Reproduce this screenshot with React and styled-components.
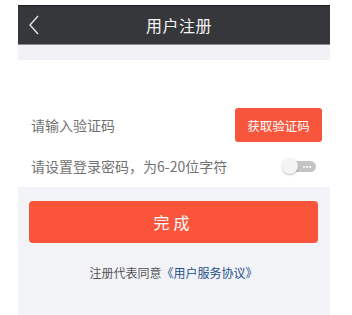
import React from "react";
import styled, { createGlobalStyle } from "styled-components";

const Global = createGlobalStyle`
  html, body { margin: 0; padding: 0; background: #ffffff; }
  body { font-family: "Noto Sans CJK SC", "Noto Sans", sans-serif; }
`;

const Frame = styled.div`
  width: 312px;
  margin-left: 18px;
  padding-top: 5px;
  height: 310px;
  display: flex;
  flex-direction: column;
  background: #f2f3f7;
  background-clip: content-box;
`;

const Header = styled.div`
  height: 38px;
  border-top: 1px solid #1c1d20;
  border-bottom: 1px solid #8d8e92;
  background: #36373b;
  display: flex;
  align-items: center;
  justify-content: center;
  position: relative;
`;

const Back = styled.div`
  position: absolute;
  left: 10px;
  top: 9px;
  width: 12px;
  height: 20px;
  display: flex;
`;

const Title = styled.span`
  color: #f4f4f4;
  font-size: 16px;
  letter-spacing: 0.5px;
  margin-left: 10px;
`;

const Strip = styled.div`
  height: 15px;
  background: #f2f2f6;
`;

const Card = styled.div`
  background: #ffffff;
  padding: 48px 12px 0 12px;
  height: 79px;
  display: flex;
  flex-direction: column;
  gap: 16px;
`;

const Row = styled.div`
  display: flex;
  align-items: center;
  justify-content: space-between;
  height: ${(p) => p.h}px;
`;

const Label = styled.span`
  color: #727272;
  font-size: 14px;
  padding-left: 1px;
`;

const CodeButton = styled.div`
  width: 87px;
  height: 34px;
  border-radius: 3px;
  background: #f7553c;
  color: #ffffff;
  font-size: 12.5px;
  display: flex;
  align-items: center;
  justify-content: center;
  margin-right: -4px;
`;

const Toggle = styled.div`
  position: relative;
  width: 36px;
  height: 16px;
`;

const Track = styled.div`
  position: absolute;
  left: 4px;
  top: 3px;
  width: 30px;
  height: 11px;
  border-radius: 6px;
  background: #c4c4c4;
  display: flex;
  align-items: center;
  justify-content: flex-end;
  padding-right: 5px;
  box-sizing: border-box;
  gap: 1px;
`;

const Dot = styled.span`
  width: 2px;
  height: 2px;
  border-radius: 50%;
  background: #ffffff;
`;

const Knob = styled.div`
  position: absolute;
  left: 0;
  top: 0;
  width: 16px;
  height: 16px;
  border-radius: 50%;
  background: #f4f4f4;
  box-shadow: 0 1px 2px rgba(0, 0, 0, 0.25);
`;

const Bottom = styled.div`
  flex: 1;
  display: flex;
  flex-direction: column;
  padding: 14px 12px 0 11px;
`;

const Done = styled.div`
  height: 42px;
  border-radius: 4px;
  background: #fa553b;
  color: #ffffff;
  font-size: 16px;
  letter-spacing: 4px;
  display: flex;
  align-items: center;
  justify-content: center;
`;

const Agree = styled.div`
  margin-top: 21px;
  text-align: center;
  font-size: 12px;
  color: #555555;
`;

const Link = styled.span`
  color: #1f4f8c;
`;

export default function App() {
  return (
    <>
      <Global />
      <Frame>
        <Header>
          <Back>
            <svg width="12" height="20" viewBox="0 0 12 20">
              <path d="M10 1 L2 10 L10 19" stroke="#e6e6e6" strokeWidth="1.4" fill="none" />
            </svg>
          </Back>
          <Title>用户注册</Title>
        </Header>
        <Strip />
        <Card>
          <Row h={34}>
            <Label>请输入验证码</Label>
            <CodeButton>获取验证码</CodeButton>
          </Row>
          <Row h={16}>
            <Label>请设置登录密码，为6-20位字符</Label>
            <Toggle>
              <Track>
                <Dot />
                <Dot />
                <Dot />
              </Track>
              <Knob />
            </Toggle>
          </Row>
        </Card>
        <Bottom>
          <Done>完成</Done>
          <Agree>
            注册代表同意<Link>《用户服务协议》</Link>
          </Agree>
        </Bottom>
      </Frame>
    </>
  );
}
